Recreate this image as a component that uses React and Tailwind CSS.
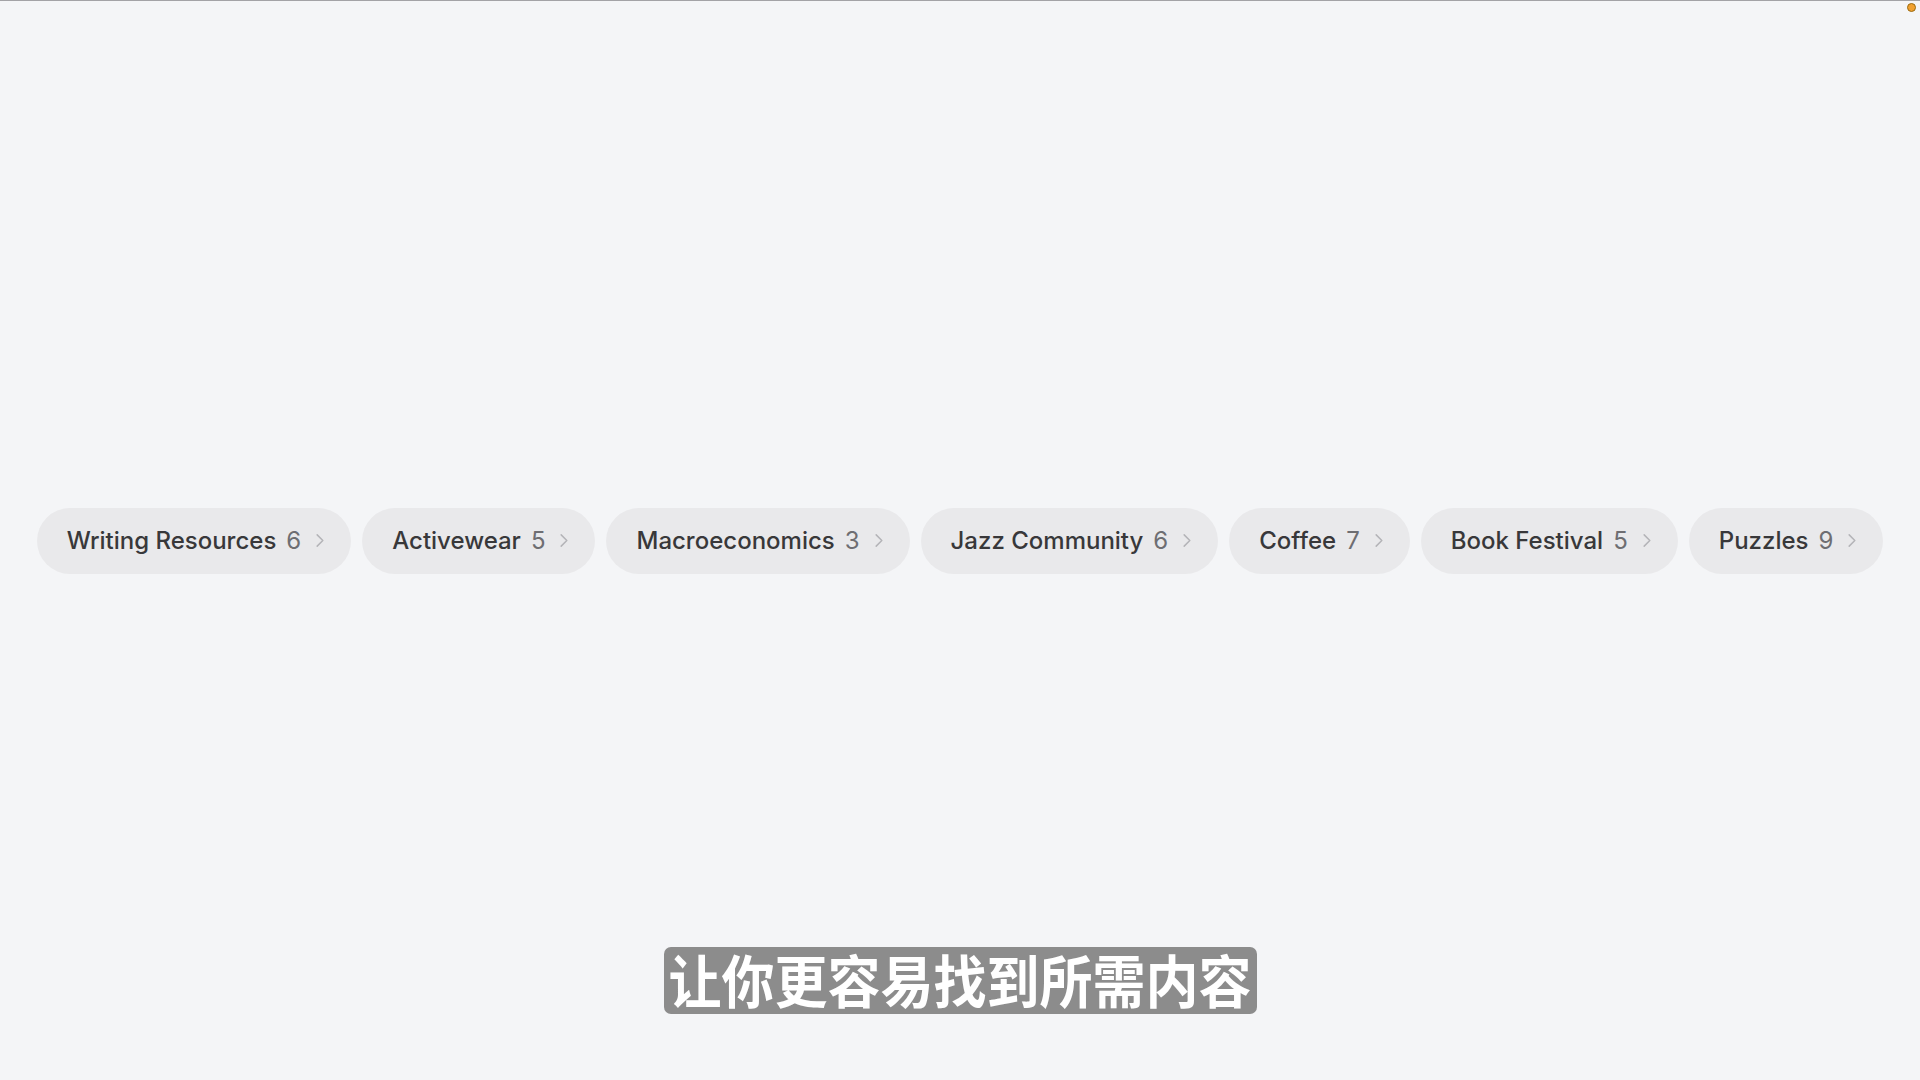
import { useMemo } from 'react'

const topics = [
  { name: 'Writing Resources', count: 6 },
  { name: 'Activewear', count: 5 },
  { name: 'Macroeconomics', count: 3 },
  { name: 'Jazz Community', count: 6 },
  { name: 'Coffee', count: 7 },
  { name: 'Book Festival', count: 5 },
  { name: 'Puzzles', count: 9 },
]

function Chevron() {
  return (
    <svg viewBox="0 0 10 16" className="ml-[14px] h-[15px] w-[10px]" fill="none" stroke="#b4b4b8" strokeWidth="1.6" strokeLinecap="round" strokeLinejoin="round">
      <path d="M2 2l6 6-6 6" />
    </svg>
  )
}

function TopicPill({ name, count }) {
  return (
    <button className="flex h-[66px] shrink-0 items-center rounded-full bg-[#e9e9eb] pl-[30px] pr-[26px]">
      <span className="text-[24px] font-medium text-[#38383a]">{name}</span>
      <span className="ml-[10px] text-[24px] font-normal text-[#6e6e72]">{count}</span>
      <Chevron />
    </button>
  )
}

export default function App() {
  const items = useMemo(() => topics, [])

  return (
    <div className="relative flex h-screen w-full items-center justify-center border-t border-[#a3a3a6] bg-[#f4f5f7] font-['Inter','Noto_Sans',sans-serif]">
      <span className="absolute right-[4px] top-[2px] h-[9px] w-[9px] rounded-full border border-[#9a6a10] bg-[#f0a030]" />

      <div className="flex items-center gap-[11px]">
        {items.map((topic) => (
          <TopicPill key={topic.name} {...topic} />
        ))}
      </div>

      <div className="absolute left-0 right-0 top-[946px] flex justify-center">
        <p className="flex h-[67px] items-center rounded-[7px] bg-[#8c8c8c] px-[5px] font-['Noto_Sans_CJK_SC',sans-serif] text-[53px] font-bold text-white">
          <span className="inline-block -translate-y-[2px] scale-y-[1.07] leading-none">让你更容易找到所需内容</span>
        </p>
      </div>
    </div>
  )
}
